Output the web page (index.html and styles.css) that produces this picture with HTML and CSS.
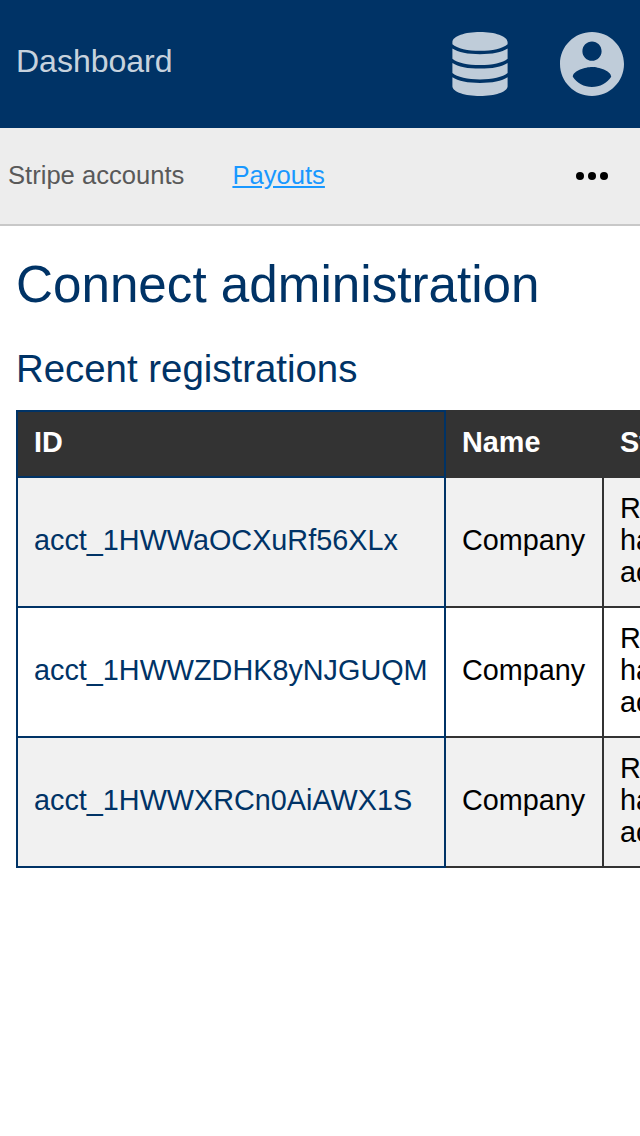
FILE: index.html
```html
<!DOCTYPE html>
<html lang="en">
<head>
<meta charset="utf-8">
<title>Dashboard</title>
<link rel="stylesheet" href="styles.css">
</head>
<body>
<header class="topbar">
  <a class="brand">Dashboard</a>
  <div class="tools">
    <svg class="database" viewBox="0 0 56 64"><path d="M.4 10C1 4 13 0 28 0s27 4 27.600 10V12.200C51 16.500 40 18.800 28 18.800S5 16.500 .4 12.200zM.4 16.500C6 20.300 16 22.200 28 22.200s22-1.900 27.600-5.700v10.200C51 30.900 40 33.100 28 33.100S5 30.900 .4 26.700zM.4 30.900C6 34.700 16 36.600 28 36.600s22-1.900 27.600-5.700v10.200C51 45.300 40 47.500 28 47.500S5 45.300 .4 41.100zM.4 45.300C6 49.100 16 51 28 51s22-1.900 27.600-5.700v9.200C55 60 43 64 28 64S1 60 .4 54.500z"/></svg>
    <svg class="account" viewBox="2 2 20 20"><path d="M12 2C6.480 2 2 6.480 2 12s4.480 10 10 10 10-4.480 10-10S17.520 2 12 2zm0 3c1.660 0 3 1.340 3 3s-1.340 3-3 3-3-1.340-3-3 1.340-3 3-3zm0 14.200c-2.500 0-4.710-1.280-6-3.220.03-1.990 4-3.080 6-3.080 1.990 0 5.970 1.090 6 3.080-1.290 1.940-3.500 3.220-6 3.220z"/></svg>
  </div>
</header>
<nav class="subnav">
  <a>Stripe accounts</a>
  <a class="active">Payouts</a>
  <svg class="more" viewBox="0 0 32 8"><circle cx="4" cy="4" r="4"/><circle cx="16" cy="4" r="4"/><circle cx="28" cy="4" r="4"/></svg>
</nav>
<main class="content">
  <h1>Connect administration</h1>
  <h2>Recent registrations</h2>
  <table class="accounts">
    <colgroup><col class="col-id"><col class="col-name"><col class="col-status"></colgroup>
    <thead><tr><th>ID</th><th>Name</th><th>Status</th></tr></thead>
    <tbody>
      <tr><td><a>acct_1HWWaOCXuRf56XLx</a></td><td>Company</td><td>Registration<br>has<br>account</td></tr>
      <tr><td><a>acct_1HWWZDHK8yNJGUQM</a></td><td>Company</td><td>Registration<br>has<br>account</td></tr>
      <tr><td><a>acct_1HWWXRCn0AiAWX1S</a></td><td>Company</td><td>Registration<br>has<br>account</td></tr>
    </tbody>
  </table>
</main>
</body>
</html>
```
FILE: styles.css
```css
* { box-sizing: border-box; }
html, body { overflow: hidden; }
body { margin: 0; height: 1136px; background: #fff; color: #000; font: 28.8px/32px "Liberation Sans", Arial, sans-serif; }
.topbar { display: flex; justify-content: space-between; align-items: center; height: 128px; padding: 0 16px; background: #036; }
.brand { padding-bottom: 6px; font-size: 32px; line-height: 36px; color: rgba(255, 255, 255, .8); }
.tools { display: flex; gap: 52px; fill: #bfccd9; }
.database { width: 56px; height: 64px; }
.account { width: 64px; height: 64px; }
.subnav { display: flex; align-items: center; gap: 48px; height: 98px; padding: 0 32px 0 8px; background: #ededed; border-bottom: 2px solid #c8c8c8; font-size: 25.6px; color: #595959; }
.subnav a { padding-bottom: 2px; }
.subnav .active { color: #1998ff; text-decoration: underline; }
.more { width: 32px; height: 8px; margin-left: auto; }
.content { padding: 30px 16px 0; color: #036; }
h1, h2 { margin: 0; font-weight: 400; }
h1 { font-size: 51.2px; line-height: 58px; }
h2 { margin-top: 33px; font-size: 38.4px; line-height: 44px; }
.accounts { width: 1000px; margin-top: 19px; table-layout: fixed; border-collapse: collapse; color: #000; }
.col-id { width: 428px; }
.col-name { width: 158px; }
.accounts th, .accounts td { padding: 14px 16px 18px; border: 2px solid #333; text-align: left; vertical-align: middle; }
.accounts th { background: #333; color: #fff; }
.accounts th:first-child, .accounts td:first-child { border-color: #036; }
.accounts td a { color: #036; }
.accounts tbody tr:nth-child(odd) { background: #f1f1f1; }
```
